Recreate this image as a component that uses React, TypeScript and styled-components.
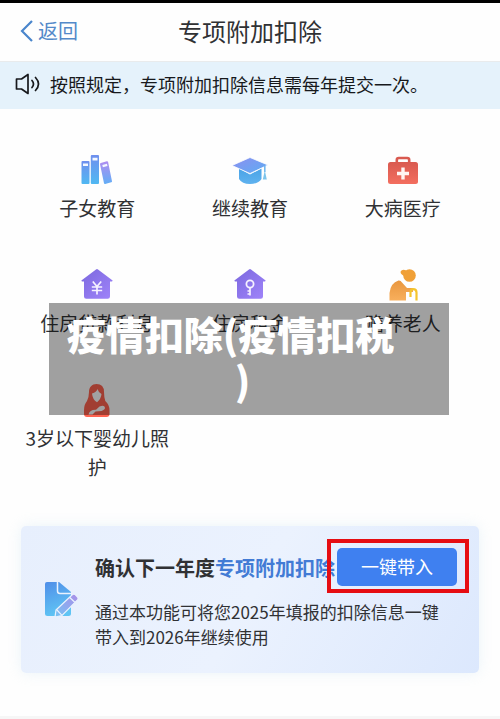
import React from 'react';
import styled, { createGlobalStyle } from 'styled-components';

const GlobalStyle = createGlobalStyle`
  *, *::before, *::after { box-sizing: border-box; }
  body {
    margin: 0;
    background: #fefefe;
    color: #303134;
    font-family: "Noto Sans CJK SC", "Noto Sans", sans-serif;
  }
  button { font-family: inherit; }
`;

const Page = styled.main`
  position: relative;
  border-top: 3px solid #000;
  border-bottom: 3px solid #f6f6f6;
`;

const Header = styled.header`
  display: grid;
  grid-template-columns: 1fr auto 1fr;
  align-items: center;
  height: 59px;
  padding: 0 20px 2px;
  border-bottom: 1px solid #e9ebec;
`;

const BackButton = styled.button`
  display: flex;
  align-items: center;
  gap: 4px;
  justify-self: start;
  padding: 0;
  border: 0;
  background: none;
  color: #5389c9;
  font-size: 20px;
  line-height: 28px;
`;

const Title = styled.h1`
  margin: 0;
  font-size: 24px;
  font-weight: 400;
  line-height: 32px;
`;

const Notice = styled.p`
  display: flex;
  align-items: center;
  gap: 9px;
  margin: 0;
  height: 47px;
  padding: 0 15px 3px;
  background: #e5f2fb;
  color: #17191c;
  font-size: 18px;
  line-height: 26px;
`;

const Categories = styled.ul`
  display: grid;
  grid-template-columns: repeat(3, 1fr);
  row-gap: 47px;
  margin: 0;
  padding: 45px 21px;
  list-style: none;
`;

const Category = styled.li`
  display: flex;
  flex-direction: column;
  align-items: center;
  gap: 5px;
`;

const CategoryLabel = styled.span`
  padding: 0 4px;
  font-size: 19px;
  line-height: 29px;
  text-align: center;
`;

const Card = styled.section`
  display: flex;
  align-items: center;
  margin: 0 21px 43px;
  padding: 13px 10px 24px 23px;
  border-radius: 5px;
  background: linear-gradient(120deg, #e7effd 0%, #ebf2fe 50%, #dce8fd 100%);
  box-shadow: 0 0 14px rgba(190, 220, 235, 0.3);
`;

const CardIcon = styled.div`
  display: flex;
  flex: none;
  width: 51px;
  padding-top: 10px;
`;

const CardBody = styled.div`
  flex: 1;
  min-width: 0;
`;

const CardHeading = styled.div`
  display: flex;
  align-items: center;
  margin-bottom: 6px;
`;

const CardTitle = styled.h2`
  margin: 4px 0 0;
  font-size: 20px;
  font-weight: 700;
  line-height: 28px;
  white-space: nowrap;
`;

const Accent = styled.span`
  color: #427bd5;
`;

const Highlight = styled.div`
  flex: none;
  margin-left: -8px;
  padding: 5px 8px 3px 6px;
  border: 4px solid #e60d12;
`;

const ImportButton = styled.button`
  display: block;
  width: 120px;
  height: 38px;
  padding: 0 0 2px;
  border: 0;
  border-radius: 5px;
  background: #3f80f0;
  color: #fff;
  font-size: 18px;
  line-height: 26px;
`;

const CardText = styled.p`
  margin: 0;
  padding-right: 20px;
  font-size: 17px;
  line-height: 25px;
`;

const Banner = styled.div`
  position: absolute;
  top: 300px;
  left: 49px;
  right: 51px;
  padding: 7px 54px 13px 17px;
  background: rgba(0, 0, 0, 0.37);
  color: #fff;
  font-size: 39px;
  font-weight: 900;
  line-height: 46px;
  text-align: center;
`;

const BannerLine = styled.span<{ $tail?: boolean }>`
  display: block;
  white-space: nowrap;
  padding-left: ${(p) => (p.$tail ? '24px' : '0')};
`;

const BackIcon = () => (
  <svg width="14" height="24" viewBox="0 0 14 24" fill="none" aria-hidden="true">
    <path d="M12 2 2 12l10 10" stroke="#4a86cc" strokeWidth="2.2" />
  </svg>
);

const SpeakerIcon = () => (
  <svg width="26" height="22" viewBox="0 0 26 22" fill="none" stroke="#17191c" strokeWidth="1.7" aria-hidden="true">
    <path d="M1.5 6h5L13 1.5v19L6.500 16h-5z" strokeLinejoin="round" />
    <path d="M17 7.500q3 3.500 0 7M20.500 4.500q6 6.500 0 13" strokeLinecap="round" />
  </svg>
);

const IconFrame = ({ children }: { children: React.ReactNode }) => (
  <svg width="38" height="34" viewBox="-2 0 38 34" aria-hidden="true">{children}</svg>
);

const BooksIcon = () => (
  <IconFrame>
    <defs>
      <linearGradient id="book" x1="0" y1="0" x2="0" y2="1">
        <stop offset="0" stopColor="#6f8fee" /><stop offset="1" stopColor="#50b8f2" />
      </linearGradient>
      <linearGradient id="bookTilt" x1="0" y1="0" x2="0" y2="1">
        <stop offset="0" stopColor="#b08df0" /><stop offset="1" stopColor="#62aef6" />
      </linearGradient>
    </defs>
    <rect x="1.500" y="7" width="8" height="23" rx="1" fill="url(#book)" />
    <rect x="10.800" y="1" width="8.200" height="29" rx="1" fill="url(#book)" />
    <path d="m20.800 9 6-1.800q1-.2 1.300.8L32 27.200q.2.800-.8 1.100l-6 1.700q-1 .2-1.200-.8L20 10.200q-.2-.9.800-1.200z" fill="url(#bookTilt)" />
    <path d="M3 9.500h5v2.500H3zM12.500 3.800h5v2.600h-5zM22.300 11l4.600-1.200.6 2.300-4.600 1.200z" fill="#f4f8ff" />
  </IconFrame>
);

const CapIcon = () => (
  <IconFrame>
    <defs>
      <linearGradient id="capTop" x1="0" y1="0" x2="1" y2="1">
        <stop offset="0" stopColor="#8d8ff0" /><stop offset="1" stopColor="#5cadf3" />
      </linearGradient>
      <linearGradient id="capBase" x1="0" y1="0" x2="0" y2="1">
        <stop offset="0" stopColor="#4aa3e6" /><stop offset="1" stopColor="#5fb2ef" />
      </linearGradient>
    </defs>
    <path d="M6 14.500 17 20.500l11.500-6V25q-3.500 5-11.500 5T6 25z" fill="url(#capBase)" />
    <path d="M17 3.500 35 11 17 19.500-1 11.500z" fill="url(#capTop)" stroke="#fefefe" strokeWidth=".8" />
    <path d="M31.800 12v6" stroke="#73b8ee" strokeWidth="1.600" />
    <path d="m31.800 16.500 2 9h-4z" fill="#7cc4ec" />
  </IconFrame>
);

const MedicalIcon = () => (
  <IconFrame>
    <defs>
      <linearGradient id="medkit" x1="0" y1="0" x2="0" y2="1">
        <stop offset="0" stopColor="#d95a50" /><stop offset="1" stopColor="#f36e5f" />
      </linearGradient>
    </defs>
    <path d="M10.800 9V6q0-2 2-2h8.400q2 0 2 2v3" fill="none" stroke="#d95a50" strokeWidth="2.600" />
    <rect x="2" y="8" width="30" height="22" rx="2.500" fill="url(#medkit)" />
    <path d="M15.300 13.500h3.400v4.300H23v3.400h-4.300v4.300h-3.400v-4.300H11v-3.400h4.300z" fill="#fff5f3" />
  </IconFrame>
);

const HouseShape = ({ id }: { id: string }) => (
  <>
    <defs>
      <linearGradient id={id} x1="0" y1="0" x2="1" y2="1">
        <stop offset="0" stopColor="#7b68de" /><stop offset="1" stopColor="#a084fa" />
      </linearGradient>
    </defs>
    <path d="M16 .4q1-.7 2 0l14.300 10.800q.8.900-.3 1.300h-2V27.500q0 2.300-2.300 2.300H6.300Q4 29.800 4 27.500V12.500H2q-1.100-.4-.3-1.300z" fill={`url(#${id})`} />
  </>
);

const LoanIcon = () => (
  <IconFrame>
    <HouseShape id="houseLoan" />
    <path d="m12.800 12.500 4.200 5 4.200-5M17 17.500v8M11.800 18h10.400M11.800 21.500h10.400" fill="none" stroke="#f6f2ff" strokeWidth="1.700" />
  </IconFrame>
);

const RentIcon = () => (
  <IconFrame>
    <HouseShape id="houseRent" />
    <circle cx="17" cy="15" r="3.600" fill="none" stroke="#f6f2ff" strokeWidth="1.800" />
    <path d="M17 18.500v8M17 22h-2.500M17 25h-2.500" fill="none" stroke="#f6f2ff" strokeWidth="1.700" />
  </IconFrame>
);

const ElderIcon = () => (
  <IconFrame>
    <defs>
      <linearGradient id="elder" x1="0" y1="0" x2="0" y2="1">
        <stop offset="0" stopColor="#e9973f" /><stop offset="1" stopColor="#f8af5c" />
      </linearGradient>
    </defs>
    <circle cx="23.500" cy="6.500" r="6.300" fill="#f0a037" />
    <path d="M20 1.200q-4-1.500-5.500 1.500.2 3.200 4 4z" fill="#f0a037" />
    <path d="M3.500 31.500V24q1-10 9-12.500 2.200-.3 3.500 2l5 5.500h6v4h-7v8.500z" fill="url(#elder)" />
    <path d="M24.500 28v-5q.5-2.800 2.500-2.800 3.500 0 3.500 3.300v8" fill="none" stroke="#f4c42c" strokeWidth="2.200" />
  </IconFrame>
);

const InfantIcon = () => (
  <IconFrame>
    <path d="M16.500 0C12 0 9 3 9 8q0 4.500-2 9-3 3.500-3 9v4q0 3 3 3h19.500q3 0 3-3v-3.500q0-6-4.200-9.500Q24 12.500 24 8q0-8-7.500-8z" fill="#ff6350" />
    <path d="M17.500 5q-1 3.200-5.500 4.500.5 6 5 8.700 4-3 4.500-8.200-3-1.500-4-5z" fill="#fff" />
    <path d="M8.500 30.500q1-5 7.500-4.800l3.500-3.200q5-2 5.500 1.300 0 2-3.500 3.200l-6 .5-3 3z" fill="#fff" />
  </IconFrame>
);

const DocumentIcon = () => (
  <svg width="35" height="37" viewBox="0 0 35 37" aria-hidden="true">
    <defs>
      <linearGradient id="sheet" x1="0" y1="0" x2="0.300" y2="1">
        <stop offset="0" stopColor="#508ee8" /><stop offset="1" stopColor="#5fc4f4" />
      </linearGradient>
      <linearGradient id="pencil" x1="0" y1="1" x2="1" y2="0">
        <stop offset="0" stopColor="#74c4f4" /><stop offset="1" stopColor="#ac8de8" />
      </linearGradient>
    </defs>
    <path d="M3 1h12l12 10v21.500q0 2.500-2.500 2.500H3.500Q1 35 1 32.500V3q0-2 2-2z" fill="url(#sheet)" />
    <path d="M13.500 1v9q0 2.500 2.500 2.500h11" fill="none" stroke="#eaf2fe" strokeWidth="1.500" />
    <path d="m12 29 16.500-15.500q1.500-1 2.700.2l2.300 2.300q1.200 1.500 0 2.800L18 34.500l-7 1.500z" fill="url(#pencil)" stroke="#eaf2fe" strokeWidth="1.200" />
    <path d="m25.500 16.300 5.300 5M12.500 28.500l5.500 5.800" stroke="#eaf2fe" strokeWidth="1.200" />
  </svg>
);

const categories = [
  { label: '子女教育', Icon: BooksIcon },
  { label: '继续教育', Icon: CapIcon },
  { label: '大病医疗', Icon: MedicalIcon },
  { label: '住房贷款利息', Icon: LoanIcon },
  { label: '住房租金', Icon: RentIcon },
  { label: '赡养老人', Icon: ElderIcon },
  { label: '3岁以下婴幼儿照护', Icon: InfantIcon },
];

export default function App() {
  return (
    <>
      <GlobalStyle />
      <Page>
        <Header>
          <BackButton type="button"><BackIcon />返回</BackButton>
          <Title>专项附加扣除</Title>
        </Header>
        <Notice><SpeakerIcon />按照规定，专项附加扣除信息需每年提交一次。</Notice>
        <Categories>
          {categories.map(({ label, Icon }) => (
            <Category key={label}>
              <Icon />
              <CategoryLabel>{label}</CategoryLabel>
            </Category>
          ))}
        </Categories>
        <Card>
          <CardIcon><DocumentIcon /></CardIcon>
          <CardBody>
            <CardHeading>
              <CardTitle>确认下一年度<Accent>专项附加扣除</Accent></CardTitle>
              <Highlight><ImportButton type="button">一键带入</ImportButton></Highlight>
            </CardHeading>
            <CardText>通过本功能可将您2025年填报的扣除信息一键带入到2026年继续使用</CardText>
          </CardBody>
        </Card>
        <Banner>
          <BannerLine>疫情扣除(疫情扣税</BannerLine>
          <BannerLine $tail>)</BannerLine>
        </Banner>
      </Page>
    </>
  );
}
